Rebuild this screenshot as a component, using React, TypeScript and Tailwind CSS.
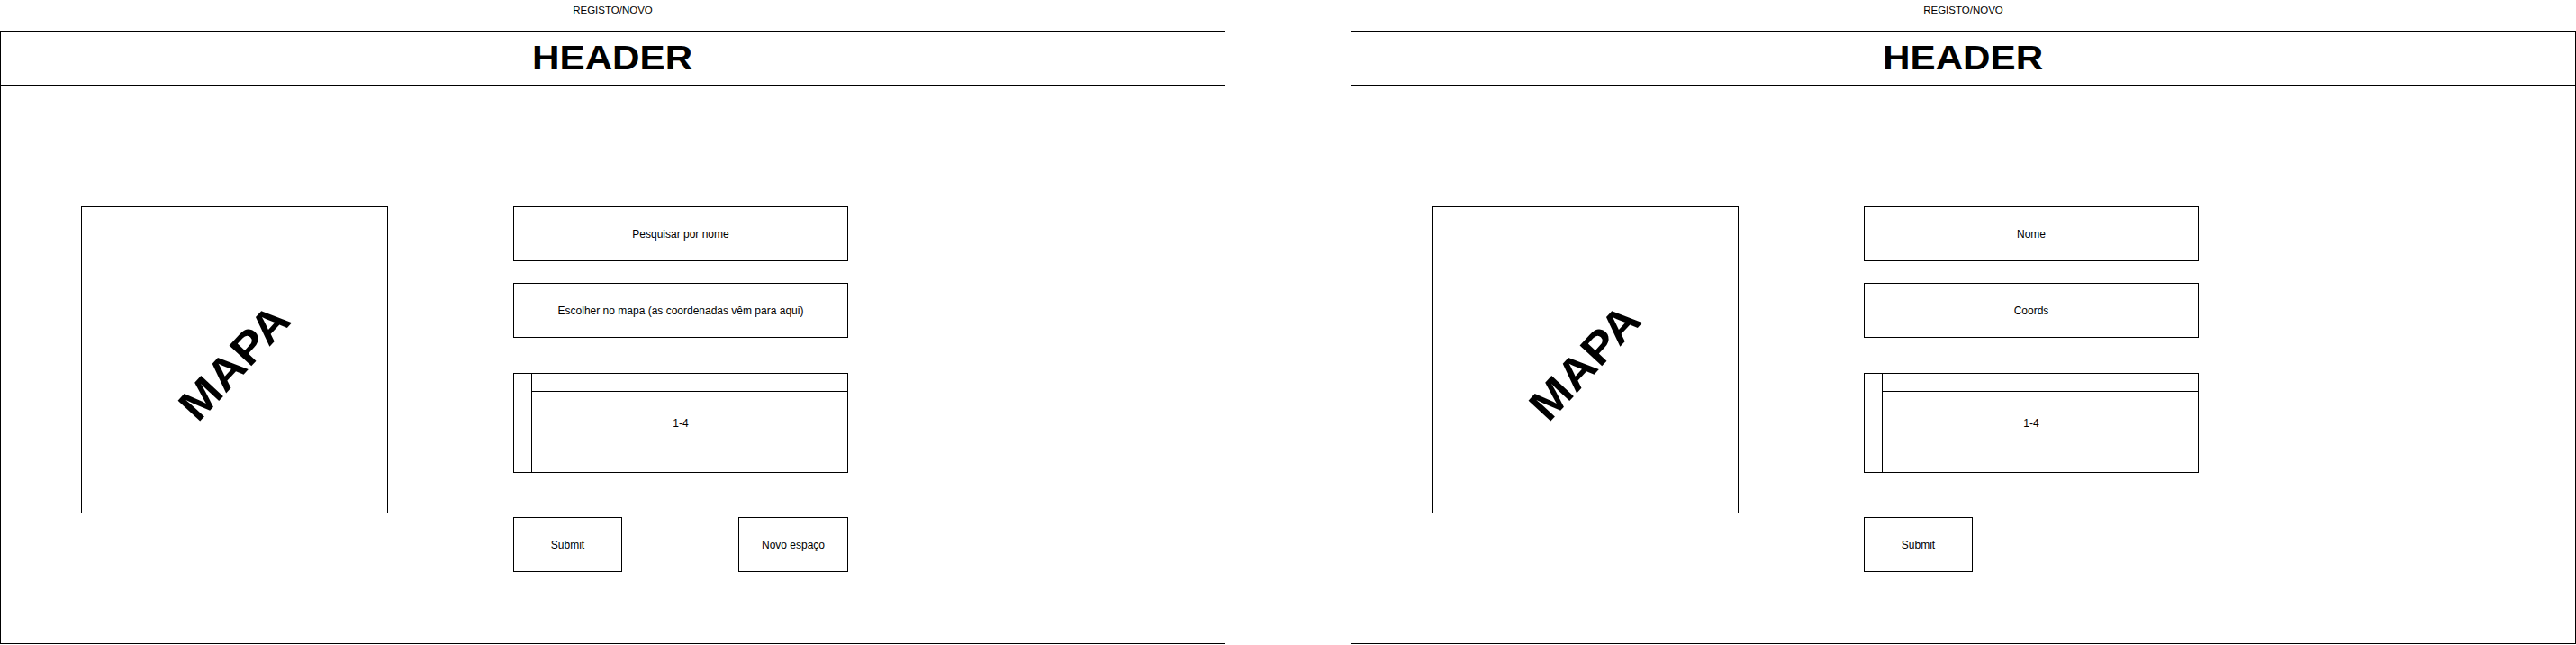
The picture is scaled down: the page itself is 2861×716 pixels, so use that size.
const font = { fontFamily: '"Liberation Sans", Arial, sans-serif' };

function Box({ label, className = '' }: { label: string; className?: string }) {
  return (
    <div className={`flex items-center justify-center border border-black text-[12px] text-black ${className}`}>
      {label}
    </div>
  );
}

function Table() {
  return (
    <div className="relative flex h-[111px] w-[372px] border border-black">
      <div className="w-[20px] border-r border-black" />
      <div className="flex flex-1 flex-col">
        <div className="h-[20px] border-b border-black" />
        <div className="flex-1" />
      </div>
      {/* label sits over the whole table */}
      <div className="absolute inset-0 flex items-center justify-center text-[12px] text-black">1-4</div>
    </div>
  );
}

function Screen({ first, second, extraButton }: { first: string; second: string; extraButton?: string }) {
  return (
    <div className="flex w-[1361px] flex-col">
      <div className="h-[34px] text-center text-[11.5px] leading-[23px] text-black">REGISTO/NOVO</div>

      <div className="flex h-[681px] flex-col border border-black">
        <div className="flex h-[60px] items-center justify-center border-b border-black">
          <span className="scale-x-[1.14] text-[37px] font-bold leading-none text-black">HEADER</span>
        </div>

        <div className="flex pl-[89px] pt-[134px]">
          {/* Map placeholder */}
          <div className="flex h-[341px] w-[341px] items-center justify-center overflow-hidden border border-black">
            <span className="translate-y-[3px] -rotate-[47deg] scale-x-[1.1] text-[49px] font-bold leading-none text-black">
              MAPA
            </span>
          </div>

          {/* Form column */}
          <div className="ml-[139px] flex w-[372px] flex-col">
            <Box label={first} className="h-[61px] w-[372px]" />
            <Box label={second} className="mt-[24px] h-[61px] w-[372px]" />
            <div className="mt-[39px]">
              <Table />
            </div>
            <div className="mt-[49px] flex justify-between">
              <Box label="Submit" className="h-[61px] w-[121px]" />
              {extraButton && <Box label={extraButton} className="h-[61px] w-[122px]" />}
            </div>
          </div>
        </div>
      </div>
    </div>
  );
}

export default function App() {
  return (
    <div className="flex h-[716px] w-[2861px] gap-[139px] bg-white" style={font}>
      <Screen first="Pesquisar por nome" second="Escolher no mapa (as coordenadas vêm para aqui)" extraButton="Novo espaço" />
      <Screen first="Nome" second="Coords" />
    </div>
  );
}
